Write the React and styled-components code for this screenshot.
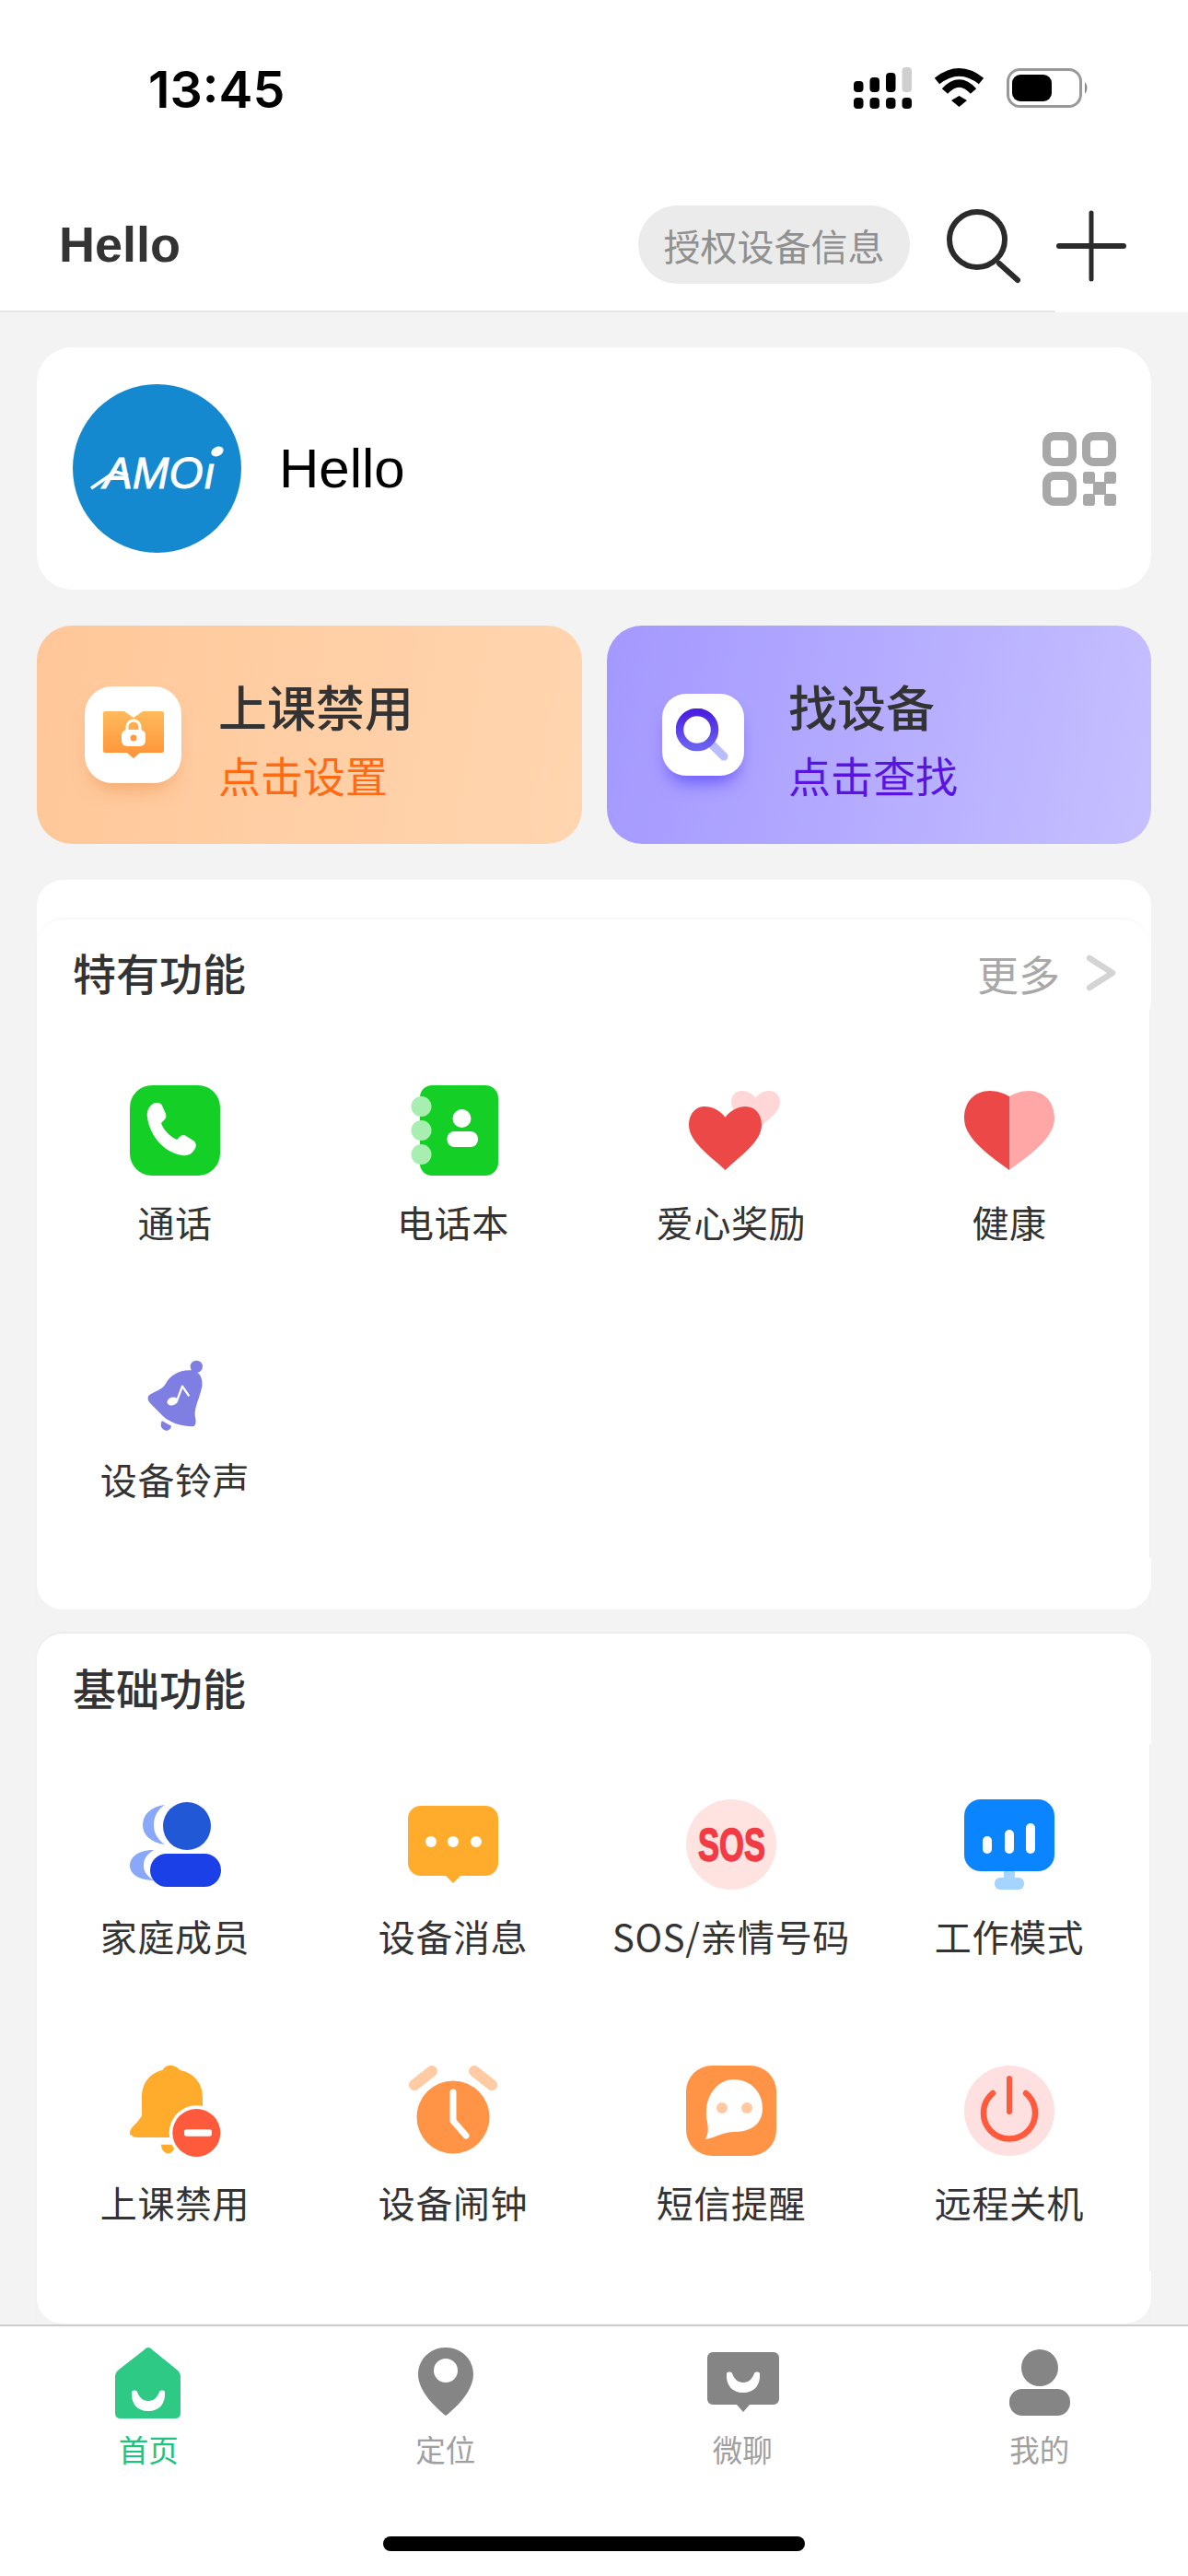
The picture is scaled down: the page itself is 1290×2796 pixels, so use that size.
import React from "react";
import styled, { createGlobalStyle } from "styled-components";

const CJK = `"Noto Sans CJK SC", "Liberation Sans", sans-serif`;

const Global = createGlobalStyle`
  html, body { margin: 0; padding: 0; background: #f3f3f3; }
  * { box-sizing: border-box; }
`;

const Page = styled.div`
  width: 1290px;
  height: 2796px;
  display: flex;
  flex-direction: column;
  background: #f3f3f3;
  overflow: hidden;
  font-family: ${CJK};
  color: #333;
`;

/* ---------- status bar ---------- */
const StatusBar = styled.div`
  height: 196px;
  background: #fff;
  display: flex;
  align-items: flex-start;
  justify-content: space-between;
  padding: 74px 107px 0 161px;
`;
const Time = styled.div`
  font-family: Inter, sans-serif;
  font-weight: 600;
  font-size: 55.5px;
  line-height: 45px;
  color: #000;
`;
const StatusIcons = styled.div`
  display: flex;
  align-items: flex-start;
  gap: 24px;
  margin-top: -1px;
`;
const StatusSvg = styled.svg`
  display: block;
  flex: none;
  overflow: visible;
  margin-top: ${(p) => p.$top || 0}px;
`;

/* ---------- nav ---------- */
const NavBar = styled.div`
  height: 141px;
  background: #fff;
  display: flex;
  align-items: center;
  padding: 0 68px 0 64px;
`;
const NavTitle = styled.div`
  flex: 1;
  font-family: "Liberation Sans", sans-serif;
  font-weight: 700;
  font-size: 54px;
  color: #333;
  margin-top: -3px;
`;
const AuthPill = styled.div`
  width: 295px;
  height: 85px;
  border-radius: 43px;
  background: #ebebeb;
  color: #909090;
  font-size: 40px;
  display: flex;
  align-items: center;
  justify-content: center;
  white-space: nowrap;
  margin-top: -2px;
`;
const NavIcon = styled.svg`
  display: block;
  flex: none;
  margin-left: ${(p) => p.$gap}px;
  overflow: visible;
`;
const NavRule = styled.div`
  height: 2px;
  background: linear-gradient(to right, #e6e6e6 1146px, #fff 1146px);
`;

/* ---------- content ---------- */
const Content = styled.div`
  display: flex;
  flex-direction: column;
  padding: 38px 40px 0;
`;
const ProfileCard = styled.div`
  height: 263px;
  width: 1210px;
  border-radius: 38px;
  background: #fff;
  display: flex;
  align-items: center;
  padding: 0 38px 0 39px;
`;
const AvatarSvg = styled.svg`
  display: block;
  flex: none;
`;
const ProfileName = styled.div`
  flex: 1;
  margin-left: 41px;
  font-family: "Liberation Sans", sans-serif;
  font-size: 60px;
  color: #000;
`;
const QrSvg = styled.svg`
  display: block;
  flex: none;
`;

const BannerRow = styled.div`
  display: grid;
  grid-template-columns: 592px 591px;
  column-gap: 27px;
  margin-top: 39px;
`;
const Banner = styled.div`
  height: 237px;
  border-radius: 38px;
  background: linear-gradient(100deg, ${(p) => p.$from}, ${(p) => p.$to});
  display: flex;
  align-items: center;
  padding-left: ${(p) => p.$pad}px;
  gap: ${(p) => p.$gap}px;
`;
const Tile = styled.div`
  flex: none;
  width: ${(p) => p.$size}px;
  height: ${(p) => p.$size}px;
  border-radius: ${(p) => p.$radius}px;
  background: #fff;
  box-shadow: 0 14px 20px -8px ${(p) => p.$shadow};
  display: flex;
  align-items: center;
  justify-content: center;
`;
const BannerText = styled.div`
  display: flex;
  flex-direction: column;
  margin-top: 13px;
`;
const BannerTitle = styled.div`
  font-size: 53px;
  line-height: 60px;
  color: #333;
  font-weight: 500;
  margin-top: -7px;
`;
const BannerSub = styled.div`
  font-size: 46px;
  line-height: 52px;
  margin-top: 18px;
  color: ${(p) => p.$color};
`;

/* ---------- function cards ---------- */
const BackPlate = styled.div`
  width: 1210px;
  height: 160px;
  margin-top: 39px;
  border-radius: 28px;
  background: #fff;
`;
const Section = styled.section`
  width: 1208px;
  margin-top: ${(p) => p.$top}px;
  position: relative;
  border-radius: 28px 28px 0 0;
  box-shadow: 0 -2px 3px -1px rgba(0, 0, 0, 0.06);
`;
const SectionHead = styled.div`
  width: ${(p) => p.$width}px;
  height: ${(p) => p.$height}px;
  background: #fff;
  border-radius: 28px 28px 0 0;
  display: flex;
  align-items: center;
  justify-content: space-between;
  padding: 0 35px 6px 39px;
`;
const SectionTitle = styled.div`
  font-size: 47px;
  font-weight: 500;
  color: #333;
`;
const MoreLink = styled.div`
  display: flex;
  align-items: center;
  gap: 27px;
  font-size: 45px;
  color: #a8a8a8;
  margin-top: 4px;
`;
const Grid = styled.div`
  display: grid;
  grid-template-columns: repeat(4, 302px);
  row-gap: ${(p) => p.$rowGap}px;
  background: #fff;
  padding-top: ${(p) => p.$top}px;
  padding-bottom: ${(p) => p.$bottom}px;
`;
const Item = styled.div`
  display: flex;
  flex-direction: column;
  align-items: center;
  padding-right: 2px;
`;
const ItemIcon = styled.svg`
  display: block;
  width: 98px;
  height: 98px;
  overflow: visible;
`;
const ItemLabel = styled.div`
  margin-top: 30px;
  font-size: 40px;
  letter-spacing: 0.6px;
  line-height: 40px;
  color: #333;
  white-space: nowrap;
`;
const SectionFoot = styled.div`
  width: 1210px;
  height: ${(p) => p.$height}px;
  background: #fff;
  border-radius: 0 0 28px 28px;
`;

/* ---------- tab bar ---------- */
const TabBar = styled.nav`
  flex: 1;
  margin-top: 1px;
  background: #fff;
  border-top: 2px solid #cdcdcd;
  display: flex;
  flex-direction: column;
`;
const TabRow = styled.div`
  display: grid;
  grid-template-columns: repeat(4, 1fr);
  padding-top: 23px;
`;
const Tab = styled.div`
  display: flex;
  flex-direction: column;
  align-items: center;
`;
const TabIcon = styled.svg`
  display: block;
  width: 80px;
  height: 80px;
`;
const TabLabel = styled.div`
  margin-top: 12px;
  font-size: 32.5px;
  line-height: 36px;
  color: ${(p) => (p.$active ? "#1cc47e" : "#a0a0a0")};
`;
const HomeIndicator = styled.div`
  width: 458px;
  height: 16px;
  border-radius: 8px;
  background: #000;
  margin: auto auto 27px;
`;

/* ---------- drawings ---------- */
const HEART =
  "M50 17C43 6 32 0 22 0C9 0 0 12 0 29C0 56 30 78 50 100C70 78 100 56 100 29C100 12 91 0 78 0C68 0 57 6 50 17Z";
const Heart = ({ x, y, w, h, fill }) => (
  <path d={HEART} fill={fill} transform={`translate(${x} ${y}) scale(${w / 100} ${h / 100})`} />
);
const smile =
  "M-18 -1C-19 12 -12 20 0 20C12 20 19 12 18 -1C17 -3 13 -3 12 -1C10 5 6 9 0 9C-6 9 -10 5 -12 -1C-13 -3 -17 -3 -18 -1Z";

const icons = {
  phone: (
    <>
      <rect width="98" height="98" rx="24" fill="#14cf25" />
      <path
        fill="#fff"
        d="M24 21c3-3 9-3 11 1l4 9c1 3 0 5-2 7l-3 3c3 8 9 14 17 18l3-3c2-2 5-3 7-1l8 5c3 2 4 6 1 10c-3 5-8 7-13 6C37 73 22 55 19 35c-1-6 1-11 5-14z"
      />
    </>
  ),
  book: (
    <>
      <path d="M26 0H84a14 14 0 0 1 14 14V84a14 14 0 0 1-14 14H26a13 13 0 0 1-13-13V13A13 13 0 0 1 26 0Z" fill="#14cf25" />
      <circle cx="14.5" cy="23" r="11" fill="#a8eeb0" />
      <circle cx="14.5" cy="49" r="11" fill="#a8eeb0" />
      <circle cx="14.5" cy="75" r="11" fill="#a8eeb0" />
      <circle cx="58.5" cy="36" r="10" fill="#fff" />
      <rect x="42.5" y="50" width="33.5" height="17" rx="8" fill="#fff" />
    </>
  ),
  hearts: (
    <>
      <Heart x={49} y={6} w={53} h={43} fill="#ffd7d7" />
      <Heart x={3} y={23} w={79} h={69} fill="#ec4848" />
    </>
  ),
  health: (
    <>
      <path d="M49 12C44 9 36 6 28 6C11 6 0 18 0 36C0 58 30 78 49 92Z" fill="#ec4848" />
      <path d="M49 12C54 9 62 6 70 6C87 6 98 18 98 36C98 58 68 78 49 92Z" fill="#ffa6a6" />
    </>
  ),
  ring: (
    <g transform="translate(-11 3) scale(0.3333)">
      <circle cx="250" cy="70" r="20" fill="#7f7fe3" />
      <path
        fill="#7f7fe3"
        d="M236 82C200 78 165 95 150 125C140 145 112 150 97 162C88 170 92 182 100 190L140 230C170 258 205 262 235 265C248 266 250 250 246 235C240 205 262 170 268 135C272 105 258 86 236 82Z"
      />
      <path fill="#7f7fe3" d="M138 247C130 258 134 275 150 278C160 280 168 270 168 263Z" />
      <ellipse cx="172" cy="183" rx="18" ry="13" fill="#fff" transform="rotate(-18 172 183)" />
      <path d="M186 182L204 134L226 166" fill="none" stroke="#fff" strokeWidth="7" strokeLinejoin="round" />
    </g>
  ),
  family: (
    <>
      <path d="M38 6C22 8 14 17 14 28C14 38 22 47 38 49C29 43 26 35 26 28C26 20 29 12 38 6Z" fill="#8aa8fa" />
      <path d="M26 55C10 55 0 62 0 72C0 81 10 88 26 88C18 83 15 78 15 72C15 65 18 60 26 55Z" fill="#8aa8fa" />
      <circle cx="62" cy="29" r="26" fill="#2058d6" />
      <rect x="22" y="59" width="77" height="36" rx="18" fill="#1c40e8" />
    </>
  ),
  message: (
    <>
      <path d="M14 7H84a14 14 0 0 1 14 14V69a14 14 0 0 1-14 14H57L49 91L41 83H14A14 14 0 0 1 0 69V21A14 14 0 0 1 14 7Z" fill="#ffab2c" />
      <circle cx="25" cy="46" r="6" fill="#fff" />
      <circle cx="49" cy="46" r="6" fill="#fff" />
      <circle cx="74" cy="46" r="6" fill="#fff" />
    </>
  ),
  sos: (
    <>
      <circle cx="49" cy="49" r="49" fill="#ffe3e1" />
      <text
        x="13"
        y="67"
        fontFamily="Liberation Sans, sans-serif"
        fontWeight="700"
        fontSize="50"
        fill="#f23c45"
        stroke="#f23c45"
        strokeWidth="1.6"
        textLength="73"
        lengthAdjust="spacingAndGlyphs"
      >
        SOS
      </text>
    </>
  ),
  work: (
    <>
      <rect width="98" height="78" rx="18" fill="#0a84ff" />
      <rect x="43" y="78" width="12" height="10" fill="#a5d4ff" />
      <rect x="33" y="85" width="32" height="13" rx="6" fill="#a5d4ff" />
      <rect x="20" y="40" width="10" height="19" rx="5" fill="#fff" />
      <rect x="44" y="33" width="10" height="26" rx="5" fill="#fff" />
      <rect x="67" y="26" width="10" height="33" rx="5" fill="#fff" />
    </>
  ),
  bell: (
    <g transform="translate(-11 -12) scale(0.3333)">
      <path
        fill="#ffab2c"
        d="M135 293H180C180 310 168 322 158 322C145 322 135 308 135 293ZM165 35C178 35 190 42 195 50C240 60 270 90 270 140V240H60C40 268 30 268 34 250C37 235 60 222 72 205V140C72 90 100 60 140 50C145 42 152 35 165 35Z"
      />
      <path fill="#ffab2c" d="M34 250C38 268 45 270 60 270H180V200H72Z" />
      <circle cx="250" cy="255" r="89" fill="#fff" />
      <circle cx="250" cy="255" r="78" fill="#ff5a3c" />
      <rect x="210" y="244" width="90" height="22" rx="7" fill="#fff" />
    </g>
  ),
  clock: (
    <>
      <path d="M26 6L7 21" stroke="#ffcba5" strokeWidth="12" strokeLinecap="round" />
      <path d="M72 6L91 21" stroke="#ffcba5" strokeWidth="12" strokeLinecap="round" />
      <circle cx="49" cy="56" r="39.5" fill="#ff9447" />
      <path d="M49 29V60L63 76" fill="none" stroke="#fff" strokeWidth="7" strokeLinecap="round" strokeLinejoin="round" />
    </>
  ),
  sms: (
    <>
      <rect width="98" height="98" rx="28" fill="#ff9447" />
      <path d="M52 15C70 15 83 29 83 46C83 64 70 72 52 72C40 72 33 78 21 80C25 72 24 66 22 56C20 33 34 15 52 15Z" fill="#fff" />
      <circle cx="39" cy="46" r="6" fill="#ffc9a2" />
      <circle cx="66" cy="46" r="6" fill="#ffc9a2" />
    </>
  ),
  power: (
    <>
      <circle cx="49" cy="49" r="49" fill="#ffe0e0" />
      <path d="M49 14V50" stroke="#ff5a3c" strokeWidth="6" strokeLinecap="round" />
      <path d="M31 30A28 28 0 1 0 67 30" fill="none" stroke="#ff5a3c" strokeWidth="6.5" strokeLinecap="round" />
    </>
  ),
};

const featured = [
  ["phone", "通话"],
  ["book", "电话本"],
  ["hearts", "爱心奖励"],
  ["health", "健康"],
  ["ring", "设备铃声"],
];
const basics = [
  ["family", "家庭成员"],
  ["message", "设备消息"],
  ["sos", "SOS/亲情号码"],
  ["work", "工作模式"],
  ["bell", "上课禁用"],
  ["clock", "设备闹钟"],
  ["sms", "短信提醒"],
  ["power", "远程关机"],
];

const tabs = [
  {
    label: "首页",
    active: true,
    icon: (
      <>
        <path d="M40 0Q43 0 45 3L71 24Q75 27 75 32V71Q75 77 69 77H10Q4 77 4 71V32Q4 27 8 24L35 3Q37 0 40 0Z" fill="#2dc985" />
        <path d={smile} fill="#fff" transform="translate(40 49)" />
      </>
    ),
  },
  {
    label: "定位",
    icon: (
      <>
        <path d="M40 0C57 0 70 13 70 29C70 48 50 66 40 74C30 66 10 48 10 29C10 13 23 0 40 0Z" fill="#858585" />
        <circle cx="40" cy="25" r="13" fill="#fff" />
      </>
    ),
  },
  {
    label: "微聊",
    icon: (
      <>
        <path d="M8 5H74a6 6 0 0 1 6 6V56a6 6 0 0 1-6 6H48L41 70L34 62H8a6 6 0 0 1-6-6V11a6 6 0 0 1 6-6Z" fill="#858585" />
        <path d={smile} fill="#fff" transform="translate(41 29)" />
      </>
    ),
  },
  {
    label: "我的",
    icon: (
      <>
        <circle cx="40" cy="22" r="20" fill="#858585" />
        <rect x="7" y="45" width="66" height="29" rx="14" fill="#858585" />
      </>
    ),
  },
];

const Signal = () => (
  <StatusSvg width="63" height="45" viewBox="0 0 63 45">
    <rect x="0" y="15" width="10.5" height="12" rx="4" />
    <rect x="17.5" y="11" width="10.5" height="16" rx="4" />
    <rect x="35" y="6" width="10.5" height="21" rx="4" />
    <rect x="52.5" y="0" width="10.5" height="27" rx="4" fill="#cfcfcf" />
    <rect x="0" y="33" width="10.5" height="12" rx="4" />
    <rect x="17.5" y="33" width="10.5" height="12" rx="4" />
    <rect x="35" y="33" width="10.5" height="12" rx="4" />
    <rect x="52.5" y="33" width="10.5" height="12" rx="4" />
  </StatusSvg>
);
const Wifi = () => (
  <StatusSvg $top={2} width="55" height="41" viewBox="0 0 55 41">
    <path d="M3.5 13Q27.5 -6.3 51.5 13" fill="none" stroke="#000" strokeWidth="8.5" />
    <path d="M12 24Q27.5 7 43 24" fill="none" stroke="#000" strokeWidth="8.5" />
    <path d="M19 34L27.5 29L36 34L27.5 41Z" />
  </StatusSvg>
);
const Battery = () => (
  <StatusSvg $top={1} width="90" height="43" viewBox="0 0 90 43">
    <rect x="1.5" y="1.5" width="79" height="40" rx="13" fill="none" stroke="#999" strokeWidth="3" />
    <rect x="6" y="7" width="43" height="29" rx="9" />
    <path d="M85 15Q90 21 85 28Z" fill="#888" />
  </StatusSvg>
);

export default function App() {
  return (
    <Page>
      <Global />
      <StatusBar>
        <Time>13:45</Time>
        <StatusIcons>
          <Signal />
          <Wifi />
          <Battery />
        </StatusIcons>
      </StatusBar>

      <NavBar>
        <NavTitle>Hello</NavTitle>
        <AuthPill>授权设备信息</AuthPill>
        <NavIcon $gap={41} width="78" height="78" viewBox="0 0 78 78">
          <circle cx="32" cy="32" r="30" fill="none" stroke="#2b2b2b" strokeWidth="6" />
          <path d="M56 58L76 76" stroke="#2b2b2b" strokeWidth="6" strokeLinecap="round" />
        </NavIcon>
        <NavIcon $gap={41} width="74" height="76" viewBox="0 0 74 76">
          <path d="M37 2V74" stroke="#2b2b2b" strokeWidth="5" strokeLinecap="round" />
          <path d="M2 38H72" stroke="#2b2b2b" strokeWidth="6" strokeLinecap="round" />
        </NavIcon>
      </NavBar>
      <NavRule />

      <Content>
        <ProfileCard>
          <AvatarSvg width="183" height="183" viewBox="0 0 183 183">
            <circle cx="91.5" cy="91.5" r="91.5" fill="#1589d0" />
            <text
              x="33"
              y="113"
              fontFamily="Liberation Sans, sans-serif"
              fontStyle="italic"
              fontSize="48"
              fill="#fff"
              stroke="#fff"
              strokeWidth="0.8"
              textLength="122"
              lengthAdjust="spacingAndGlyphs"
            >
              AMOı
            </text>
            <path d="M20 113L46 95L60 99" fill="none" stroke="#fff" strokeWidth="3.5" strokeLinejoin="round" />
            <ellipse cx="157" cy="73" rx="7" ry="5" fill="#fff" transform="rotate(-25 157 73)" />
          </AvatarSvg>
          <ProfileName>Hello</ProfileName>
          <QrSvg width="80" height="80" viewBox="0 0 80 80">
            <rect x="4.5" y="4.5" width="28" height="28" rx="8" fill="none" stroke="#a8a8a8" strokeWidth="9" />
            <rect x="47.5" y="4.5" width="28" height="28" rx="8" fill="none" stroke="#a8a8a8" strokeWidth="9" />
            <rect x="4.5" y="47.5" width="28" height="28" rx="8" fill="none" stroke="#a8a8a8" strokeWidth="9" />
            <rect x="44" y="43" width="13" height="13" rx="3" fill="#a8a8a8" />
            <rect x="67" y="43" width="13" height="13" rx="3" fill="#a8a8a8" />
            <rect x="55" y="54" width="14" height="14" fill="#a8a8a8" />
            <rect x="44" y="67" width="13" height="13" rx="3" fill="#a8a8a8" />
            <rect x="67" y="67" width="13" height="13" rx="3" fill="#a8a8a8" />
          </QrSvg>
        </ProfileCard>

        <BannerRow>
          <Banner $from="#ffc799" $to="#ffd6b0" $pad={52} $gap={40}>
            <Tile $size={105} $radius={30} $shadow="rgba(232,140,70,.55)">
              <svg width="66" height="52" viewBox="0 0 66 52">
                <defs>
                  <linearGradient id="bookFill" x1="0" y1="0" x2="0" y2="1">
                    <stop offset="0" stopColor="#ffbb5c" />
                    <stop offset="1" stopColor="#ff9238" />
                  </linearGradient>
                </defs>
                <path
                  d="M2 0H23L33 7L43 0H64Q66 0 66 2V43Q66 45 64 45H40L33 51L26 45H2Q0 45 0 43V2Q0 0 2 0Z"
                  fill="url(#bookFill)"
                />
                <path d="M26 22V17a7 7 0 0 1 14 0V22" fill="none" stroke="#fff" strokeWidth="3" />
                <rect x="20" y="20" width="26" height="18" rx="6" fill="#fff" />
                <circle cx="33" cy="29" r="3.5" fill="#ff9a40" />
              </svg>
            </Tile>
            <BannerText>
              <BannerTitle>上课禁用</BannerTitle>
              <BannerSub $color="#ff6a13">点击设置</BannerSub>
            </BannerText>
          </Banner>
          <Banner $from="#a498ff" $to="#c6c0ff" $pad={60} $gap={48}>
            <Tile $size={89} $radius={26} $shadow="rgba(80,60,255,.8)">
              <svg width="60" height="58" viewBox="0 0 60 58">
                <defs>
                  <linearGradient id="lensFill" x1="0" y1="0" x2="0" y2="1">
                    <stop offset="0" stopColor="#4a1fe0" />
                    <stop offset="1" stopColor="#6c62f2" />
                  </linearGradient>
                </defs>
                <path d="M38 38L52 52" stroke="#b9bdff" strokeWidth="9" strokeLinecap="round" />
                <circle cx="23" cy="23" r="19" fill="none" stroke="url(#lensFill)" strokeWidth="8.5" />
              </svg>
            </Tile>
            <BannerText>
              <BannerTitle>找设备</BannerTitle>
              <BannerSub $color="#5a14e0">点击查找</BannerSub>
            </BannerText>
          </Banner>
        </BannerRow>

        <BackPlate />
        <Section $top={-117}>
          <SectionHead $width={1208} $height={118}>
            <SectionTitle>特有功能</SectionTitle>
            <MoreLink>
              更多
              <svg width="35" height="40" viewBox="0 0 35 40">
                <path d="M5 4L30 20L5 36" fill="none" stroke="#d4d4d4" strokeWidth="6.5" strokeLinecap="round" strokeLinejoin="round" />
              </svg>
            </MoreLink>
          </SectionHead>
          <Grid $top={62} $rowGap={111} $bottom={66}>
            {featured.map(([key, label]) => (
              <Item key={label}>
                <ItemIcon viewBox="0 0 98 98">{icons[key]}</ItemIcon>
                <ItemLabel>{label}</ItemLabel>
              </Item>
            ))}
          </Grid>
          <SectionFoot $height={56} />
        </Section>

        <Section $top={26}>
          <SectionHead $width={1210} $height={120}>
            <SectionTitle>基础功能</SectionTitle>
          </SectionHead>
          <Grid $top={60} $rowGap={121} $bottom={55}>
            {basics.map(([key, label]) => (
              <Item key={label}>
                <ItemIcon viewBox="0 0 98 98">{icons[key]}</ItemIcon>
                <ItemLabel>{label}</ItemLabel>
              </Item>
            ))}
          </Grid>
          <SectionFoot $height={57} />
        </Section>
      </Content>

      <TabBar>
        <TabRow>
          {tabs.map((t) => (
            <Tab key={t.label}>
              <TabIcon viewBox="0 0 80 80">{t.icon}</TabIcon>
              <TabLabel $active={t.active}>{t.label}</TabLabel>
            </Tab>
          ))}
        </TabRow>
        <HomeIndicator />
      </TabBar>
    </Page>
  );
}
